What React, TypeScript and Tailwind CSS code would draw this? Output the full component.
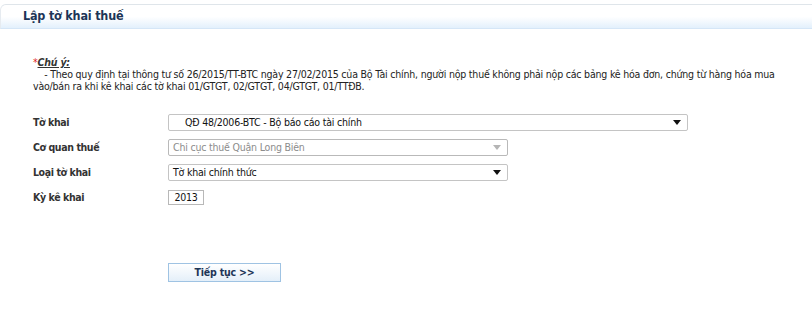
const Arrow = ({ muted = false }: { muted?: boolean }) => (
  <svg width="8" height="5" viewBox="0 0 8 5" className="shrink-0">
    <path d="M0 0h8L4 5z" fill={muted ? "#b5b5b5" : "#111"} />
  </svg>
);

const Select = ({
  value,
  width,
  disabled = false,
  padLeft = "pl-[4px]",
}: {
  value: string;
  width: string;
  disabled?: boolean;
  padLeft?: string;
}) => (
  <div
    className={`${width} h-[17px] flex items-center justify-between border rounded-[2px] pr-[6px] ${padLeft} ${
      disabled ? "border-[#b9b9b9] text-[#8c8c8c] bg-white" : "border-[#c4c4c4] text-[#111] bg-white"
    }`}
  >
    <span className="leading-none">{value}</span>
    <Arrow muted={disabled} />
  </div>
);

const Label = ({ children }: { children: string }) => (
  <span className="font-bold text-[#333] tracking-[-0.4px]">{children}</span>
);

export default function App() {
  return (
    <div
      className="w-[812px] h-[310px] bg-white text-[10.5px] tracking-[-0.2px] text-[#222] overflow-hidden"
      style={{ fontFamily: '"DejaVu Sans Condensed", "DejaVu Sans", sans-serif' }}
    >
      {/* Header */}
      <div className="pt-[4px]">
        <div className="h-[25px] flex items-center pl-[22px] border-t border-[#dfe5ea] border-b border-b-[#d5e6f7] rounded-tl-[6px] border-l border-l-[#e6ebf0] bg-gradient-to-b from-white via-white to-[#e3f0fc]">
          <h1 className="text-[12.5px] tracking-[-0.2px] font-bold text-[#1d3557] leading-none">Lập tờ khai thuế</h1>
        </div>
      </div>

      {/* Note */}
      <div className="pl-[33px] pt-[27px] leading-[12px]">
        <div>
          <span className="text-[#e02020]">*</span>
          <span className="font-bold italic underline text-[#333]">Chú ý:</span>
        </div>
        <div className="pr-[18px]">
          &nbsp;&nbsp;&nbsp;&nbsp;- Theo quy định tại thông tư số 26/2015/TT-BTC ngày 27/02/2015 của Bộ Tài chính, người nộp thuế không phải nộp các bảng kê hóa đơn, chứng từ hàng hóa mua vào/bán ra khi kê khai các tờ khai 01/GTGT, 02/GTGT, 04/GTGT, 01/TTĐB.
        </div>
      </div>

      {/* Form */}
      <div className="pl-[33px] pt-[18px] grid grid-cols-[135px_1fr] auto-rows-[25px] items-center">
        <Label>Tờ khai</Label>
        <Select value="QĐ 48/2006-BTC - Bộ báo cáo tài chính" width="w-[520px]" padLeft="pl-[16px]" />

        <Label>Cơ quan thuế</Label>
        <Select value="Chi cục thuế Quận Long Biên" width="w-[340px]" disabled />

        <Label>Loại tờ khai</Label>
        <Select value="Tờ khai chính thức" width="w-[340px]" />

        <Label>Kỳ kê khai</Label>
        <div className="w-[36px] h-[15px] border border-[#b8b8b8] flex items-center justify-center text-[#111] leading-none">
          2013
        </div>
      </div>

      {/* Action */}
      <div className="pl-[168px] pt-[53px]">
        <button className="w-[113px] h-[19px] border border-[#9fc3e3] bg-gradient-to-b from-white to-[#e4eff9] font-bold text-[#1d3557] leading-none tracking-[-0.2px]">
          Tiếp tục &gt;&gt;
        </button>
      </div>
    </div>
  );
}
